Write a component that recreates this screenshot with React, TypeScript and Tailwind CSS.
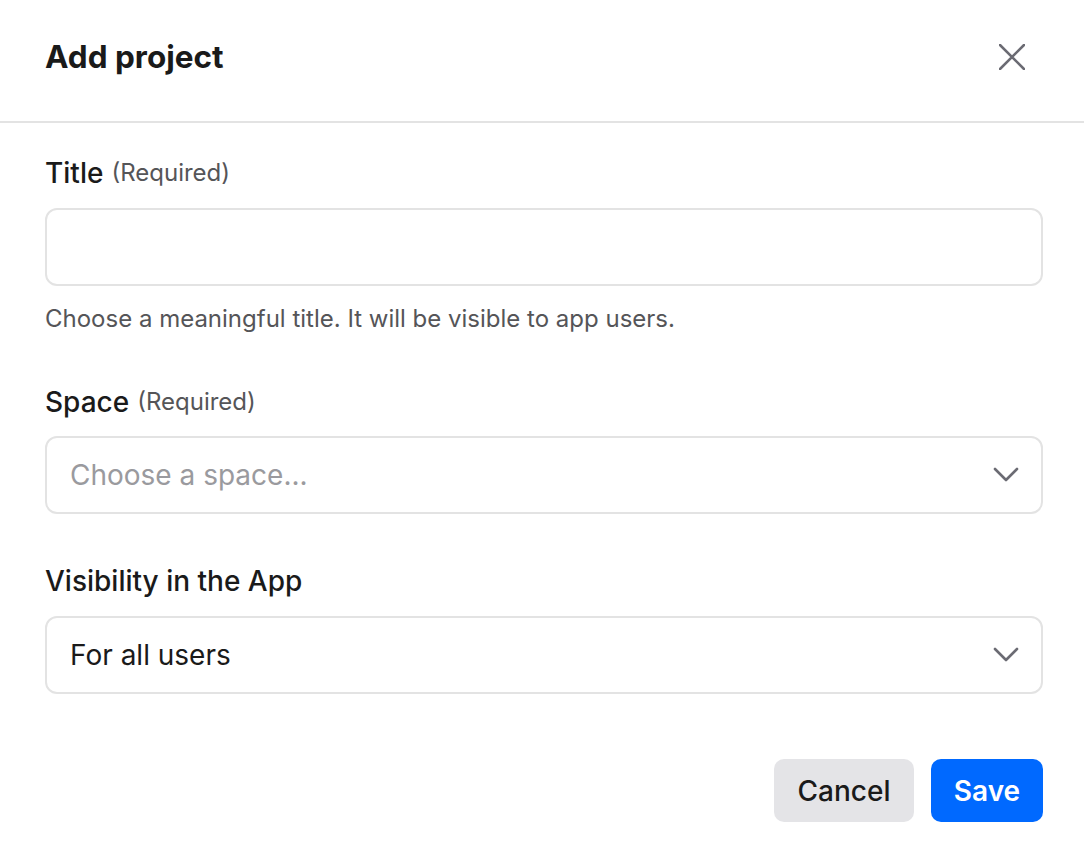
const font = { fontFamily: "Inter, 'Noto Sans', sans-serif" };

function Label({ text, required }: { text: string; required?: boolean }) {
  return (
    <div className="flex h-8 items-center gap-2">
      <span className="text-[28px] font-medium text-[#1a1a1a]">{text}</span>
      {required ? <span className="text-[24px] text-[#555558]">(Required)</span> : null}
    </div>
  );
}

function Chevron() {
  return (
    <svg width="26" height="16" viewBox="0 0 26 16" fill="none" className="text-[#6b6b73]">
      <polyline
        points="2,2 13,13 24,2"
        stroke="currentColor"
        strokeWidth="2.6"
        strokeLinecap="round"
        strokeLinejoin="round"
      />
    </svg>
  );
}

function SelectBox({ value, placeholder }: { value?: string; placeholder?: string }) {
  return (
    <div className="flex h-[78px] items-center justify-between rounded-xl border-2 border-[#e3e3e3] pl-[23px] pr-[22px]">
      <span className={value ? "text-[28px] text-[#1a1a1a]" : "text-[28px] text-[#9a9a9e]"}>
        {value || placeholder}
      </span>
      <Chevron />
    </div>
  );
}

export default function App() {
  return (
    <div className="min-h-[850px] w-full bg-white" style={font}>
      <header className="flex h-[123px] items-center justify-between border-b-2 border-[#e3e3e3] pb-[8px] pl-[45px] pr-[59px]">
        <h1 className="text-[31.5px] font-bold text-[#1a1a1a]">Add project</h1>
        <svg width="26" height="26" viewBox="0 0 26 26" fill="none" className="text-[#6b6b73]">
          <path d="M1 1 L25 25 M25 1 L1 25" stroke="currentColor" strokeWidth="2.5" strokeLinecap="round" />
        </svg>
      </header>

      <div className="flex flex-col pl-[45px] pr-[41px] pt-[34px]">
        <Label text="Title" required />
        <div className="mt-[19px] h-[78px] rounded-xl border-2 border-[#e3e3e3]" />
        <p className="mt-[17px] h-8 text-[24px] leading-8 text-[#555558]">
          Choose a meaningful title. It will be visible to app users.
        </p>

        <div className="mt-[51px]">
          <Label text="Space" required />
        </div>
        <div className="mt-[18px]">
          <SelectBox placeholder="Choose a space..." />
        </div>

        <div className="mt-[51px]">
          <Label text="Visibility in the App" />
        </div>
        <div className="mt-[19px]">
          <SelectBox value="For all users" />
        </div>

        <div className="mt-[65px] flex justify-end gap-[17px]">
          <button
            type="button"
            className="h-[63px] w-[140px] rounded-[10px] bg-[#e4e4e7] text-[28px] font-medium text-[#1a1a1a]"
          >
            Cancel
          </button>
          <button
            type="button"
            className="h-[63px] w-[112px] rounded-[10px] bg-[#0069ff] text-[28px] font-semibold text-white"
          >
            Save
          </button>
        </div>
      </div>
    </div>
  );
}
